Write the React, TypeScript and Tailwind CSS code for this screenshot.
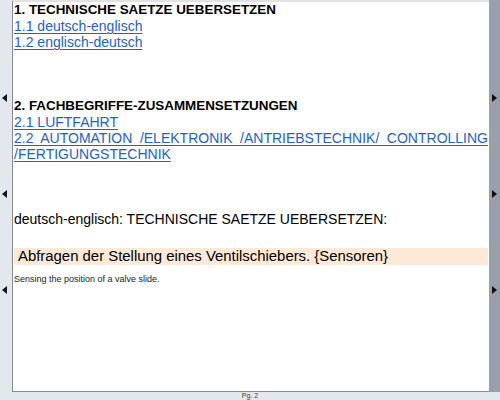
import React from 'react';

const LeftArrow: React.FC = () => (
    <svg width="5" height="8" viewBox="0 0 5 8" className="block">
        <path d="M5 0 L0 4 L5 8 Z" fill="#111" />
    </svg>
);

const RightArrow: React.FC = () => (
    <svg width="5" height="8" viewBox="0 0 5 8" className="block">
        <path d="M0 0 L5 4 L0 8 Z" fill="#111" />
    </svg>
);

const link = 'text-[#2362c2] underline decoration-1 underline-offset-2';

const App: React.FC = () => {
    return (
        <div className="w-[500px] h-[400px] flex flex-col bg-[#e3e7ee] font-['Liberation_Sans',Arial,sans-serif] overflow-hidden">
            <div className="flex h-[392px]">
                {/* left gutter */}
                <div className="w-[12px] flex flex-col items-start pl-[2px] pt-[94px] gap-[88px] bg-[#e3e7ee]">
                    <LeftArrow />
                    <LeftArrow />
                    <LeftArrow />
                </div>

                {/* page */}
                <div className="flex-1 bg-white border-l border-b border-t-2 border-l-[#8a8a8a] border-b-[#8a8a8a] border-t-[#e2e2e2] pl-[1px] pr-[1px] text-black">
                    <div className="text-[14px] leading-[16px]">
                        <p className="font-bold text-[13.4px]">1. TECHNISCHE SAETZE UEBERSETZEN</p>
                        <p><span className={link}>1.1 deutsch-englisch</span></p>
                        <p><span className={link}>1.2 englisch-deutsch</span></p>
                        <div className="h-[48px]" />
                        <p className="font-bold text-[13.4px]">2. FACHBEGRIFFE-ZUSAMMENSETZUNGEN</p>
                        <p><span className={link}>2.1 LUFTFAHRT</span></p>
                        <p className="text-justify">
                            <span className={link}>2.2 AUTOMATION /ELEKTRONIK /ANTRIEBSTECHNIK/ CONTROLLING /FERTIGUNGSTECHNIK</span>
                        </p>
                        <div className="h-[48px]" />
                        <p className="text-[14px] leading-[18px]">deutsch-englisch: TECHNISCHE SAETZE UEBERSETZEN:</p>
                        <div className="h-[20px]" />
                        <p className="bg-[#fde9d8] text-[14.9px] leading-[17px] pl-[4px]">
                            Abfragen der Stellung eines Ventilschiebers. {'{'}Sensoren{'}'}
                        </p>
                        <p className="text-[9px] leading-[12px] mt-[8px] text-[#222]">Sensing the position of a valve slide.</p>
                    </div>
                </div>

                {/* right gutter */}
                <div className="w-[11px] flex flex-col items-start pl-[3px] pt-[94px] gap-[88px] bg-[#9aa0ab]">
                    <RightArrow />
                    <RightArrow />
                    <RightArrow />
                </div>
            </div>

            {/* status */}
            <div className="h-[8px] flex items-center justify-center">
                <span className="text-[7px] leading-[8px] text-[#444]">Pg. 2</span>
            </div>
        </div>
    );
};

export default App;
